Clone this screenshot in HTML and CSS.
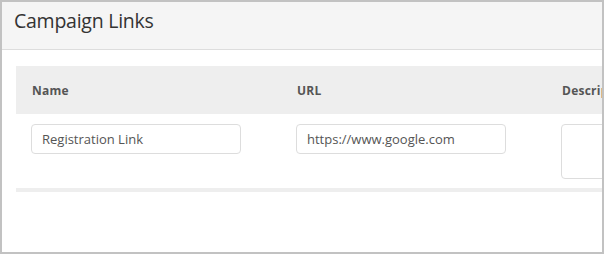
FILE: index.html
```html
<!DOCTYPE html>
<html>
<head>
<meta charset="utf-8">
<link rel="stylesheet" href="styles.css">
</head>
<body>
<div class="panel">
  <div class="panel-header">
    <h1 class="title">Campaign Links</h1>
  </div>
  <div class="panel-body">
    <div class="table">
      <div class="row head">
        <div class="th">Name</div>
        <div class="th">URL</div>
        <div class="th">Description</div>
      </div>
      <div class="row data">
        <div class="td"><input class="field" type="text" value="Registration Link"></div>
        <div class="td"><input class="field" type="text" value="https://www.google.com"></div>
        <div class="td"><textarea class="area"></textarea></div>
      </div>
    </div>
  </div>
</div>
</body>
</html>
```

FILE: styles.css
```css
html, body {
  margin: 0;
  padding: 0;
  background: #ffffff;
}
.panel {
  box-sizing: border-box;
  width: 604px;
  height: 254px;
  border: 2px solid #c2c2c2;
  overflow: hidden;
  font-family: "Open Sans", "Liberation Sans", sans-serif;
}
.panel-header {
  box-sizing: border-box;
  height: 48px;
  background: #f5f5f5;
  border-bottom: 1px solid #dddddd;
  padding: 6px 0 0 12px;
}
.title {
  margin: 0;
  font-size: 19.5px;
  line-height: 26px;
  font-weight: 400;
  color: #333333;
  letter-spacing: -0.25px;
}
.panel-body {
  padding: 16px 0 0 14px;
}
.table {
  width: 900px;
  border-bottom: 4px solid #eeeeee;
}
.row {
  display: grid;
  grid-template-columns: 265px 265px 300px;
}
.head {
  background: #eeeeee;
  height: 48px;
  align-items: center;
}
.th {
  padding-left: 16px;
  font-size: 12px;
  font-weight: 700;
  color: #555555;
  letter-spacing: 0.25px;
}
.data {
  padding: 10px 0 9px;
  align-items: start;
}
.td {
  padding-left: 15px;
}
.field {
  box-sizing: border-box;
  width: 210px;
  height: 30px;
  border: 1px solid #dddddd;
  border-radius: 4px;
  padding: 0 10px;
  font-family: "Open Sans", "Liberation Sans", sans-serif;
  font-size: 13px;
  color: #555555;
  background: #ffffff;
  outline: none;
}
.area {
  box-sizing: border-box;
  display: block;
  width: 260px;
  height: 55px;
  border: 1px solid #dddddd;
  border-radius: 4px;
  resize: none;
  background: #ffffff;
  outline: none;
}
```
